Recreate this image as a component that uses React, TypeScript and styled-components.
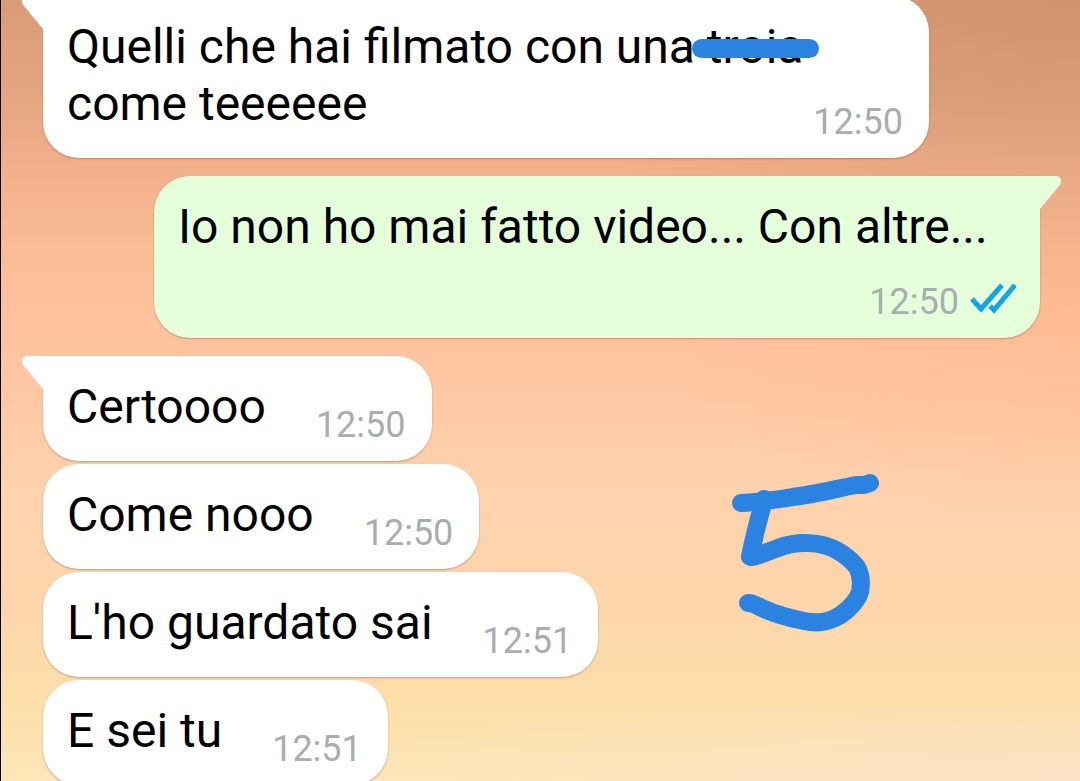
import React from "react";
import styled, { createGlobalStyle, css } from "styled-components";

const INK = "#2b83e1";

const GlobalStyle = createGlobalStyle`
  *, *::before, *::after { box-sizing: border-box; }
  body { margin: 0; font-family: Roboto, "Liberation Sans", sans-serif; }
`;

const Chat = styled.main`
  position: relative;
  height: 100vh;
  overflow: hidden;
  padding: 0 40px 0 42px;
  border-left: 1px solid #000;
  background:
    radial-gradient(ellipse 50% 42% at 100% 0%, rgba(196, 138, 104, 0.5), rgba(200, 140, 106, 0) 100%),
    radial-gradient(ellipse 40% 26% at 100% 40%, rgba(255, 184, 142, 0.6), rgba(255, 184, 142, 0) 100%),
    radial-gradient(ellipse 70% 12% at 100% 100%, rgba(253, 224, 198, 0.9), rgba(253, 224, 198, 0) 100%),
    linear-gradient(180deg, #da9b77 0%, #e5a581 12%, #f2b08b 22%, #fbbc95 32%, #fec19c 40%, #fec7a3 50%, #fed2ad 62%, #fdd6ab 78%, #fddfa9 90%, #fde6b8 100%);
`;

const MessageList = styled.ol`
  display: flex;
  flex-direction: column;
  gap: 3px;
  margin: -4px 0 0;
  padding: 0;
  list-style: none;
`;

const Bubble = styled.li<{ $sent?: boolean; $tail?: boolean; $spaced?: boolean }>`
  position: relative;
  display: flow-root;
  align-self: ${(p) => (p.$sent ? "flex-end" : "flex-start")};
  max-width: calc(100% - 111px);
  margin-top: ${(p) => (p.$spaced ? "15px" : "0")};
  padding: 22px 26px 15px 24px;
  border-radius: 36px;
  background: ${(p) => (p.$sent ? "#e5ffdb" : "#fff")};
  color: #000;
  font-size: 48px;
  line-height: 57px;
  box-shadow: 0 1px 2px rgba(120, 70, 40, 0.4);
  ${(p) =>
    p.$tail &&
    (p.$sent
      ? css`border-top-right-radius: 0;`
      : css`border-top-left-radius: 0;`)}
`;

const Tail = styled.svg<{ $sent?: boolean }>`
  position: absolute;
  top: 0;
  ${(p) => (p.$sent ? "left: 100%;" : "right: 100%;")}
  width: 22px;
  height: 34px;
  fill: ${(p) => (p.$sent ? "#e5ffdb" : "#fff")};
`;

const Meta = styled.span`
  float: right;
  display: flex;
  align-items: center;
  gap: 11px;
  margin: 26px 0 0 50px;
  color: #a9adaf;
  font-size: 36px;
  line-height: 42px;
`;

const Ticks = styled.svg`
  width: 46px;
  height: 30px;
  margin-right: -2px;
  margin-bottom: 6px;
  fill: none;
  stroke: #12a5ea;
  stroke-width: 5;
`;

const Scribbled = styled.span`
  position: relative;

  &::after {
    content: "";
    position: absolute;
    left: -15px;
    right: -16px;
    top: 21px;
    height: 19px;
    border-radius: 10px;
    background: ${INK};
  }
`;

const Doodle = styled.svg`
  position: absolute;
  top: 470px;
  left: 727px;
  width: 156px;
  height: 164px;
  fill: none;
  stroke: ${INK};
  stroke-width: 18;
  stroke-linecap: round;
  stroke-linejoin: round;
`;

type Message = {
  text: React.ReactNode;
  time: string;
  sent?: boolean;
  tail?: boolean;
  spaced?: boolean;
};

const messages: Message[] = [
  {
    text: (
      <>
        Quelli che hai filmato con una <Scribbled>troia</Scribbled> come teeeeee
      </>
    ),
    time: "12:50",
    tail: true,
  },
  { text: "Io non ho mai fatto video... Con altre...", time: "12:50", sent: true, tail: true, spaced: true },
  { text: "Certoooo", time: "12:50", tail: true, spaced: true },
  { text: "Come nooo", time: "12:50" },
  { text: "L'ho guardato sai", time: "12:51" },
  { text: "E sei tu", time: "12:51" },
];

function BubbleTail({ sent }: { sent?: boolean }) {
  return (
    <Tail $sent={sent} viewBox="0 0 22 34" aria-hidden="true">
      <path
        d={
          sent
            ? "M0 0H15C21 0 23 5 19 10L0 33Z"
            : "M22 0H7C1 0 -1 5 3 10L22 33Z"
        }
      />
    </Tail>
  );
}

export default function App() {
  return (
    <>
      <GlobalStyle />
      <Chat>
        <MessageList>
          {messages.map((m, i) => (
            <Bubble key={i} $sent={m.sent} $tail={m.tail} $spaced={m.spaced}>
              {m.tail && <BubbleTail sent={m.sent} />}
              {m.text}
              <Meta>
                <time>{m.time}</time>
                {m.sent && (
                  <Ticks viewBox="0 0 46 30" role="img" aria-label="Letto">
                    <path d="M2 15L11 25L32 1" />
                    <path d="M20 22L24 26L45 1" />
                  </Ticks>
                )}
              </Meta>
            </Bubble>
          ))}
        </MessageList>
        <Doodle viewBox="728 470 156 164" role="img" aria-label="5">
          <path d="M741 503C765 502 785 498 806 495C824 492 840 488 856 485L864 485L870 483" />
          <path d="M764 499C761 513 755 530 750 557C757 557 764 553 778 548C796 541 821 541 838 551C845 555 852 561 857 567C862 576 862 589 858 597C852 607 842 615 835 618C825 623 813 623 804 621C789 618 775 614 764 609C757 606 754 603 748 603" />
        </Doodle>
      </Chat>
    </>
  );
}
